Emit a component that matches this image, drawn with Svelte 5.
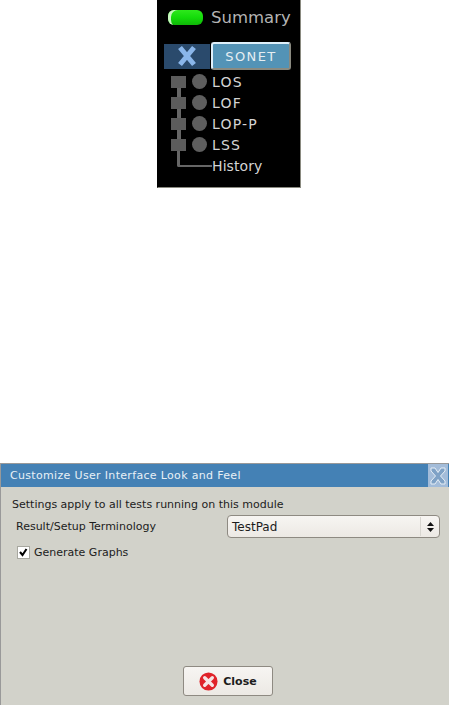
<script lang="ts">
  const alarms = ['LOS', 'LOF', 'LOP-P', 'LSS'];
</script>

<div class="page">
  <div class="panel">
    <div class="summary">
      <span class="led"></span>
      <span class="summary__label">Summary</span>
    </div>

    <div class="tabs">
      <div class="tab-x">
        <svg width="24" height="24" viewBox="0 0 24 24" aria-hidden="true">
          <path d="M5 3.500 L19 20.500 M19 3.500 L5 20.500" fill="none" stroke="#8ab6ea" stroke-width="5" />
        </svg>
      </div>
      <button class="tab-sonet">SONET</button>
    </div>

    <div class="tree">
      {#each alarms as name, i}
        <div class="row" class:row--first={i === 0}>
          <span class="node"></span>
          <span class="dot"></span>
          <span class="row__label">{name}</span>
        </div>
      {/each}
      <div class="row row--history">
        <span class="elbow"></span>
        <span class="row__label">History</span>
      </div>
    </div>
  </div>

  <div class="dialog">
    <div class="titlebar">
      <span class="titlebar__text">Customize User Interface Look and Feel</span>
      <span class="titlebar__close">
        <svg width="20" height="20" viewBox="0 0 20 20" aria-hidden="true">
          <path d="M3 2 L7 2 L10 6.500 L13 2 L17 2 L17 5 L12.500 10 L17 15 L17 18 L13 18 L10 13.500 L7 18 L3 18 L3 15 L7.500 10 L3 5 Z" fill="#7fa2c6" stroke="#e6eef6" stroke-width="1" />
        </svg>
      </span>
    </div>

    <div class="dialog__body">
      <p class="intro">Settings apply to all tests running on this module</p>
      <div class="field">
        <span class="field__label">Result/Setup Terminology</span>
        <div class="select">
          <span class="select__value">TestPad</span>
          <span class="select__arrows">
            <svg width="7" height="10" viewBox="0 0 7 10" aria-hidden="true">
              <path d="M3.500 0 L7 4 L0 4 Z M0 6 L7 6 L3.500 10 Z" fill="#111" />
            </svg>
          </span>
        </div>
      </div>
      <label class="check">
        <span class="check__box">
          <svg width="11" height="11" viewBox="0 0 11 11" aria-hidden="true">
            <path d="M2 5 L4.500 8 L8.500 2" fill="none" stroke="#000" stroke-width="2" />
          </svg>
        </span>
        Generate Graphs
      </label>

      <div class="footer">
        <button class="close-btn">
          <svg width="19" height="19" viewBox="0 0 20 20" aria-hidden="true">
            <circle cx="10" cy="10" r="9.500" fill="#e0232a" />
            <path d="M6 6 L14 14 M14 6 L6 14" stroke="#f6e4e4" stroke-width="3.600" stroke-linecap="round" />
          </svg>
          Close
        </button>
      </div>
    </div>
  </div>
</div>

<style>
  :global(body) {
    margin: 0;
    background: #fff;
  }

  .page {
    width: 450px;
    height: 705px;
    overflow: hidden;
    font-family: "DejaVu Sans", sans-serif;
    display: flex;
    flex-direction: column;
  }

  .panel {
    box-sizing: border-box;
    width: 144px;
    height: 189px;
    margin-left: 157px;
    margin-top: -1px;
    background: #000;
    border: 1px solid #000;
    border-right-color: #8a8a80;
    border-bottom-color: #8a8a80;
    padding-left: 6px;
    color: #ddd;
  }

  .summary {
    display: flex;
    align-items: center;
    gap: 8px;
    height: 19px;
    margin-top: 8px;
    margin-left: 4px;
  }

  .led {
    width: 35px;
    height: 15px;
    border-radius: 6px;
    background: linear-gradient(#2ee81c, #14dc0a 50%, #0fb808);
    box-shadow: inset 4px 1px 0 -1px #c8f5c0;
  }

  .summary__label {
    font-size: 16.500px;
    color: #b4b4b4;
  }

  .tabs {
    display: flex;
    align-items: center;
    margin-top: 15px;
  }

  .tab-x {
    width: 46px;
    height: 25px;
    background: #2a4a6c;
    display: flex;
    align-items: center;
    justify-content: center;
  }

  .tab-sonet {
    box-sizing: border-box;
    width: 80px;
    height: 28px;
    margin-left: 1px;
    padding: 0;
    background: #5393b6;
    border: 2px solid;
    border-color: #dff0fa #8a8a80 #8a8a80 #dff0fa;
    border-radius: 3px;
    color: #e6eef2;
    font-family: inherit;
    font-size: 13px;
    letter-spacing: 1.400px;
  }

  .tree {
    margin-top: 1px;
    margin-left: 7px;
  }

  .row {
    position: relative;
    display: flex;
    align-items: center;
    height: 21px;
  }

  .node {
    position: relative;
    width: 15px;
    height: 12px;
    background: #5c5c5c;
  }

  .row:not(.row--first) .node::before {
    content: '';
    position: absolute;
    left: 6px;
    top: -9px;
    width: 4px;
    height: 9px;
    background: #666;
  }

  .dot {
    width: 15px;
    height: 15px;
    margin-left: 6px;
    border-radius: 50%;
    background: #5e5e5e;
  }

  .row__label {
    margin-left: 5px;
    font-size: 14px;
    letter-spacing: 1.200px;
    color: #d4d4d4;
  }

  .row--history {
    height: 22px;
  }

  .elbow {
    width: 35px;
    height: 16px;
    margin-left: 6px;
    margin-top: -14px;
    border-left: 3px solid #666;
    border-bottom: 2px solid #666;
    border-bottom-left-radius: 2px;
    box-sizing: border-box;
  }

  .row--history .row__label {
    margin-left: 0;
    letter-spacing: 0.100px;
    font-size: 14px;
  }

  .dialog {
    box-sizing: border-box;
    width: 449px;
    height: 242px;
    margin-top: 275px;
    background: #d2d2ca;
    border-top: 1px solid #999;
    border-left: 1px solid #999;
    font-size: 11px;
    color: #1c1c1c;
  }

  .titlebar {
    display: flex;
    align-items: center;
    justify-content: space-between;
    height: 23px;
    padding-right: 1px;
    background: #4481b5;
    color: #e8f0f6;
  }

  .titlebar__text {
    margin-left: 9px;
    letter-spacing: 0.330px;
  }

  .titlebar__close {
    display: flex;
    align-items: center;
    justify-content: center;
    width: 20px;
    height: 23px;
    background: #a3bcd9;
  }

  .dialog__body {
    display: flex;
    flex-direction: column;
    height: 218px;
  }

  .intro {
    margin: 10px 0 0 11px;
    line-height: 15px;
  }

  .field {
    display: flex;
    align-items: center;
    justify-content: space-between;
    margin-top: 3px;
    padding: 0 9px 0 15px;
  }

  .select {
    box-sizing: border-box;
    width: 213px;
    height: 23px;
    display: flex;
    align-items: center;
    justify-content: space-between;
    background: linear-gradient(#f7f5f2, #ece9e4);
    border: 1px solid #8e8a82;
    border-radius: 4px;
    padding-left: 4px;
    font-size: 12px;
  }

  .select__arrows {
    display: flex;
    align-items: center;
    justify-content: center;
    width: 18px;
    height: 19px;
    border-left: 1px solid #d8d6d0;
  }

  .check {
    display: flex;
    align-items: center;
    gap: 5px;
    margin: 8px 0 0 17px;
  }

  .check__box {
    box-sizing: border-box;
    width: 11px;
    height: 11px;
    display: flex;
    background: #fff;
    outline: 1px solid #a8a8a0;
  }

  .footer {
    display: flex;
    justify-content: center;
    margin-top: auto;
    margin-bottom: 9px;
    padding-left: 6px;
  }

  .close-btn {
    box-sizing: border-box;
    width: 90px;
    height: 30px;
    display: flex;
    align-items: center;
    justify-content: center;
    gap: 5px;
    padding: 0;
    background: linear-gradient(#f7f5f2, #ece9e4);
    border: 1px solid #8e8a82;
    border-radius: 3px;
    font-family: inherit;
    font-size: 11px;
    font-weight: bold;
    color: #1c1c1c;
  }
</style>
